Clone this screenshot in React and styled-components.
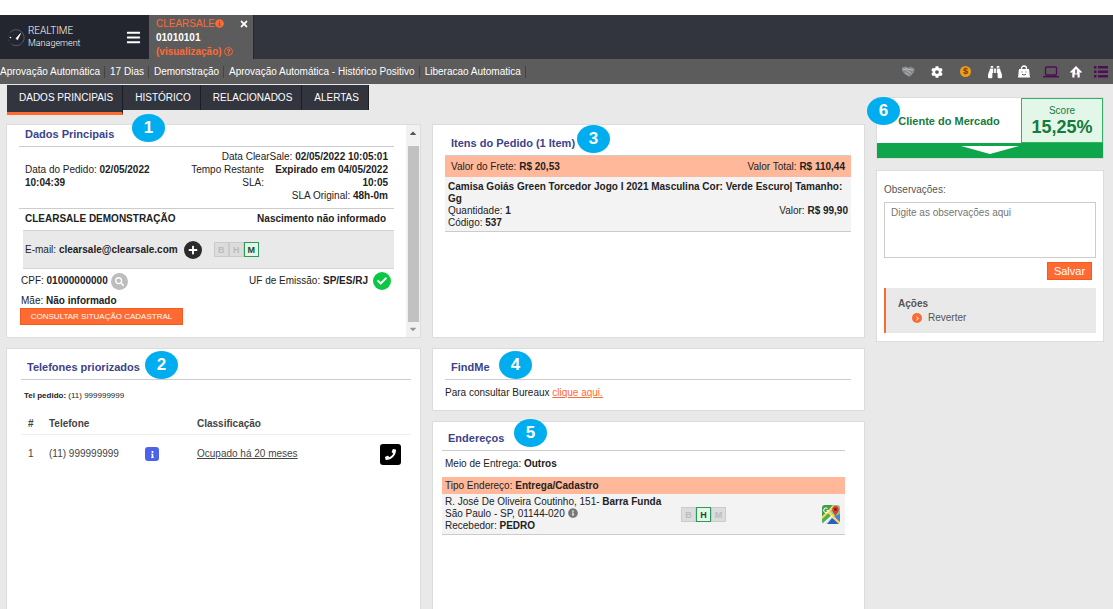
import React from 'react'
import styled, { createGlobalStyle } from 'styled-components'
import {
  FaBars, FaCog, FaBinoculars, FaInfoCircle, FaRegQuestionCircle, FaTimes, FaPlus,
  FaSearch, FaCheck, FaInfo, FaPhone, FaChevronRight, FaCaretUp, FaCaretDown
} from 'react-icons/fa'

const GlobalStyle = createGlobalStyle`
  * {
    box-sizing: border-box;
  }

  body {
    margin: 0;
    background: #fff;
    font-family: 'Liberation Sans', Arial, sans-serif;
    font-size: 10px;
    line-height: 12px;
    color: #222;
  }

  h2, h3, p {
    margin: 0;
  }

  button, textarea {
    font-family: inherit;
  }
`

const infoItems = ['Aprovação Automática', '17 Dias', 'Demonstração', 'Aprovação Automática - Histórico Positivo', 'Liberacao Automatica']
const tabs = ['DADOS PRINCIPAIS', 'HISTÓRICO', 'RELACIONADOS', 'ALERTAS']
const phones = [{ id: 1, number: '(11) 999999999', status: 'Ocupado há 20 meses' }]

const GaugeIcon = () => (
  <svg width='18' height='20' viewBox='0 0 18 20' fill='none'>
    <path d='M4 17.5A8 8 0 1 0 2.5 5' stroke='#565a62' strokeWidth='1' />
    <path d='M2.5 5A8 8 0 0 0 4 17.5' stroke='#3c4048' strokeWidth='1' strokeDasharray='2 2' />
    <path d='M8 11.5l4.5-5-3 6.2z' fill='#fff' stroke='#fff' strokeWidth='.8' />
    <circle cx='2.5' cy='10.5' r='.8' fill='#fff' />
  </svg>
)

const HandshakeIcon = () => (
  <svg width='14' height='12' viewBox='0 0 14 12'>
    <path d='M1 1.500l3-1 3 1L10 .8l3.500 1.700-.5 4-2 2L8.500 11 6 9.500 3.500 8 1 5z' fill='#85898c' />
    <path d='M1.500 3l4 1 5 4M4 2l4 1.500 4.500.5M4 6.500l4 3' stroke='#c4c7c8' fill='none' strokeWidth='.8' />
  </svg>
)

const BagIcon = () => (
  <svg width='12' height='13' viewBox='0 0 12 13'>
    <path d='M3.500 5V3.300a2.500 2.300 0 0 1 5 0V5' fill='none' stroke='#fff' strokeWidth='1.300' />
    <path d='M1 4h10l1 8.500H0z' fill='#fff' />
    <path d='M4 6.500v1M8 6.500v1M4 9.300q2 1.600 4 0' fill='none' stroke='#5c5c5c' strokeWidth='1' />
  </svg>
)

const LaptopIcon = () => (
  <svg width='16' height='12' viewBox='0 0 16 12' fill='none' stroke='#4d0d52'>
    <rect x='2.500' y='1' width='11' height='8' rx='1' strokeWidth='1.300' />
    <path d='M0 10.700h16' strokeWidth='1.500' />
  </svg>
)

const HouseIcon = () => (
  <svg width='12' height='12' viewBox='0 0 12 12'>
    <path d='M6 0l6 6-1 .9-1.300-1V11.500H7.500V8.500h-3v3H2.300V5.900L1 6.900 0 6z' fill='#fff' />
    <path d='M6 3.500v4' stroke='#7b2680' strokeWidth='1.400' />
  </svg>
)

const ListIcon = () => (
  <svg width='14' height='12' viewBox='0 0 14 12'>
    <path d='M0 0h2.500v2.500H0zM4 0h10v2.500H4zM0 4.500h2.500V7H0zM4 4.500h10V7H4zM0 9h2.500v2.500H0zM4 9h10v2.500H4z' fill='#4d0d52' />
  </svg>
)

const MapIcon = () => (
  <svg width='18' height='19' viewBox='0 0 18 19'>
    <defs>
      <clipPath id='map'><rect width='18' height='19' rx='3' /></clipPath>
    </defs>
    <g clipPath='url(#map)'>
      <rect width='18' height='19' fill='#e9e4d6' />
      <path d='M0 0h11L0 12z' fill='#3f9e4b' />
      <path d='M0 12l6-4 4 4-8 7H0z' fill='#4fae58' />
      <path d='M10 0h8v10l-5 2-5-6z' fill='#8cc487' />
      <path d='M5 19l5-6 8 6z' fill='#2c5fc4' />
      <path d='M11 12l7-3v8z' fill='#4a7fdb' />
      <path d='M0 13L12 1M7 7l11 12' stroke='#f7d84a' strokeWidth='2' />
      <path d='M1 19l9-8' stroke='#fff' strokeWidth='1.600' />
      <path d='M5.500 3.500a2.300 2.300 0 1 0 .8 2H4.500' stroke='#fff' fill='none' strokeWidth='1.100' />
    </g>
    <path d='M13.500 12c0-3-3.300-4.300-3.300-7.500a3.300 3.500 0 0 1 6.600 0c0 3.200-3.300 4.500-3.300 7.500z' fill='#dd3b32' />
    <circle cx='13.500' cy='4.400' r='1.300' fill='#7a1712' />
  </svg>
)

const HistoryMarks = ({ active }) => (
  <Marks>
    {['B', 'H', 'M'].map((mark) => (
      <Mark key={mark} $active={mark === active}>{mark}</Mark>
    ))}
  </Marks>
)

const App = () => {
  return (
    <Page>
      <GlobalStyle />
      <Header>
        <Brand>
          <GaugeIcon />
          <BrandName>REALTIME<small>Management</small></BrandName>
          <IconButton aria-label='Menu'><FaBars size={15} /></IconButton>
        </Brand>
        <OrderTab>
          <div>
            <Orange>CLEARSALE<FaInfoCircle size={9} /></Orange>
            <b>01010101</b>
            <Orange as='b'>(visualização) <FaRegQuestionCircle size={9} /></Orange>
          </div>
          <IconButton aria-label='Fechar'><FaTimes size={10} /></IconButton>
        </OrderTab>
      </Header>
      <InfoBar>
        <InfoList>
          {infoItems.map((item) => <li key={item}>{item}</li>)}
        </InfoList>
        <Toolbar>
          <IconButton aria-label='Parceiros'><HandshakeIcon /></IconButton>
          <IconButton aria-label='Configurações'><FaCog size={12} /></IconButton>
          <IconButton aria-label='Valores'><Coin>$</Coin></IconButton>
          <IconButton aria-label='Pesquisar'><FaBinoculars size={14} /></IconButton>
          <IconButton aria-label='Compras'><BagIcon /></IconButton>
          <IconButton aria-label='Dispositivo'><LaptopIcon /></IconButton>
          <IconButton aria-label='Residência'><HouseIcon /></IconButton>
          <IconButton aria-label='Lista'><ListIcon /></IconButton>
        </Toolbar>
      </InfoBar>

      <Body>
        <Workspace>
          <Tabs>
            {tabs.map((tab, index) => <Tab key={tab} $active={index === 0}>{tab}</Tab>)}
          </Tabs>
          <Columns>
            <Column>
              <Panel $height='214px'>
                <Badge $left='125px' $top='-11px'>1</Badge>
                <MainData>
                  <MainContent>
                    <MainTitle>Dados Principais</MainTitle>
                    <Dates>
                      <p>Data do Pedido: <b>02/05/2022 10:04:39</b></p>
                      <DateList>
                        <p>Data ClearSale: <b>02/05/2022 10:05:01</b></p>
                        <Remaining>
                          <span>Tempo Restante SLA:</span>
                          <b>Expirado em 04/05/2022 10:05</b>
                        </Remaining>
                        <p>SLA Original: <b>48h-0m</b></p>
                      </DateList>
                    </Dates>
                    <Customer>
                      <b>CLEARSALE DEMONSTRAÇÃO</b>
                      <b>Nascimento não informado</b>
                    </Customer>
                    <Email>
                      <span>E-mail: <b>clearsale@clearsale.com</b></span>
                      <RoundButton $color='#2b2b2b' $size='18px' aria-label='Adicionar'><FaPlus size={10} /></RoundButton>
                      <HistoryMarks active='M' />
                    </Email>
                    <Documents>
                      <span>CPF: <b>01000000000</b></span>
                      <RoundButton $color='#bdbdbd' $size='17px' aria-label='Buscar CPF'><FaSearch size={9} /></RoundButton>
                      <Uf>UF de Emissão: <b>SP/ES/RJ</b></Uf>
                      <RoundButton $color='#0bc744' $size='18px' aria-label='Confirmado'><FaCheck size={10} /></RoundButton>
                    </Documents>
                    <Mother>Mãe: <b>Não informado</b></Mother>
                    <ConsultButton>CONSULTAR SITUAÇÃO CADASTRAL</ConsultButton>
                  </MainContent>
                  <ScrollTrack>
                    <FaCaretUp size={10} color='#555' />
                    <ScrollThumb />
                    <FaCaretDown size={10} color='#999' />
                  </ScrollTrack>
                </MainData>
              </Panel>

              <Panel $grow>
                <Badge $left='138px' $top='2px'>2</Badge>
                <PhoneContent>
                  <Title>Telefones priorizados</Title>
                  <OrderPhone><b>Tel pedido:</b> (11) 999999999</OrderPhone>
                  <PhoneTable>
                    <thead>
                      <tr>
                        <th>#</th>
                        <th>Telefone</th>
                        <th />
                        <th>Classificação</th>
                        <th />
                      </tr>
                    </thead>
                    <tbody>
                      {phones.map((phone) => (
                        <tr key={phone.id}>
                          <td>{phone.id}</td>
                          <td>{phone.number}</td>
                          <td><SquareButton $color='#4a63e8' $size='14px' aria-label='Detalhes'><FaInfo size={7} /></SquareButton></td>
                          <td><a href='#status'>{phone.status}</a></td>
                          <td><SquareButton $color='#000' $size='21px' aria-label='Ligar'><FaPhone size={11} /></SquareButton></td>
                        </tr>
                      ))}
                    </tbody>
                  </PhoneTable>
                </PhoneContent>
              </Panel>
            </Column>

            <Column>
              <Panel $height='214px'>
                <Badge $left='144px' $top='0'>3</Badge>
                <Content>
                  <Title>Itens do Pedido (1 Item)</Title>
                  <Band $height='21px'>
                    <span>Valor do Frete: <b>R$ 20,53</b></span>
                    <span>Valor Total: <b>R$ 110,44</b></span>
                  </Band>
                  <Item>
                    <b>Camisa Goiás Green Torcedor Jogo I 2021 Masculina Cor: Verde Escuro| Tamanho: Gg</b>
                    <ItemRow>
                      <span>Quantidade: <b>1</b></span>
                      <span>Valor: <b>R$ 99,90</b></span>
                    </ItemRow>
                    <p>Código: <b>537</b></p>
                  </Item>
                </Content>
              </Panel>

              <Panel $height='63px'>
                <Badge $left='66px' $top='2px'>4</Badge>
                <Content>
                  <Title>FindMe</Title>
                  <Bureaux>Para consultar Bureaux <a href='#bureaux'>clique aqui.</a></Bureaux>
                </Content>
              </Panel>

              <Panel $grow>
                <Badge $left='81px' $top='-3px'>5</Badge>
                <AddressContent>
                  <AddressTitle>Endereços</AddressTitle>
                  <Delivery>Meio de Entrega: <b>Outros</b></Delivery>
                  <AddressBand $height='17px'>
                    <span>Tipo Endereço: <b>Entrega/Cadastro</b></span>
                  </AddressBand>
                  <Address>
                    <div>
                      <p>R. José De Oliveira Coutinho, 151- <b>Barra Funda</b></p>
                      <p>São Paulo - SP, 01144-020 <FaInfoCircle size={10} color='#777' /></p>
                      <p>Recebedor: <b>PEDRO</b></p>
                    </div>
                    <HistoryMarks active='H' />
                    <IconButton aria-label='Ver no mapa'><MapIcon /></IconButton>
                  </Address>
                </AddressContent>
              </Panel>
            </Column>
          </Columns>
        </Workspace>

        <Aside>
          <ScoreCard>
            <Badge $left='-10px' $top='-1px'>6</Badge>
            <Client>Cliente do Mercado</Client>
            <Score>
              Score
              <strong>15,25%</strong>
            </Score>
            <Expand aria-label='Expandir'>
              <svg width='58' height='8' viewBox='0 0 58 8'><path d='M0 0h58L29 8z' fill='#fff' /></svg>
            </Expand>
          </ScoreCard>
          <Notes>
            <label htmlFor='notes'>Observações:</label>
            <textarea id='notes' placeholder='Digite as observações aqui' />
            <SaveButton>Salvar</SaveButton>
            <Actions>
              <h3>Ações</h3>
              <button><Arrow><FaChevronRight size={5} /></Arrow>Reverter</button>
            </Actions>
          </Notes>
        </Aside>
      </Body>
    </Page>
  )
}

const Page = styled.div`
  display: flex;
  flex-direction: column;
  min-height: 100vh;
  padding-top: 15px;
`

const Header = styled.header`
  display: flex;
  height: 44px;
  background: #32353e;
`

const IconButton = styled.button`
  display: flex;
  padding: 0;
  border: none;
  background: none;
  color: #fff;
  cursor: pointer;
`

const Brand = styled.div`
  display: flex;
  align-items: center;
  gap: 2px;
  width: 149px;
  padding: 0 8px;
  background: #23262e;

  ${IconButton} {
    margin-left: auto;
  }
`

const BrandName = styled.div`
  display: flex;
  flex-direction: column;
  font-family: Roboto, sans-serif;
  font-weight: 300;
  color: #fff;

  small {
    font-size: 9px;
  }
`

const OrderTab = styled.div`
  display: flex;
  align-items: flex-start;
  justify-content: space-between;
  width: 105px;
  padding: 2px 4px 0 7px;
  border-right: 1px solid #26282f;
  background: #5c5c5c;
  color: #fff;
  line-height: 14px;
  white-space: nowrap;

  b {
    display: block;
  }

  ${IconButton} {
    margin-top: 2px;
  }
`

const Orange = styled.span`
  display: block;
  color: #ff6a33;

  svg {
    vertical-align: -1px;
  }
`

const InfoBar = styled.div`
  display: flex;
  align-items: center;
  justify-content: space-between;
  height: 25px;
  background: #5c5c5c;
`

const InfoList = styled.ul`
  display: flex;
  margin: 0;
  padding: 0;
  list-style: none;
  color: #fff;

  li {
    padding: 0 4px 0 5px;
    border-right: 1px solid #444;
  }

  li:first-child {
    padding-left: 0;
  }
`

const Toolbar = styled.div`
  display: grid;
  grid-template-columns: repeat(5, 29px) repeat(3, 25px);

  ${IconButton} {
    align-items: center;
    justify-content: center;
  }
`

const Coin = styled.span`
  width: 11px;
  height: 11px;
  border-radius: 50%;
  background: #f29a1b;
  color: #6b3d00;
  font-size: 9px;
  font-weight: bold;
  line-height: 11px;
`

const Body = styled.main`
  display: flex;
  flex: 1;
  gap: 11px;
  padding: 0 9px 0 6px;
  background: #e9e9e9;
`

const Workspace = styled.div`
  display: flex;
  flex: 859 1 0;
  flex-direction: column;
`

const Tabs = styled.nav`
  display: flex;
  align-items: flex-start;
  height: 40px;
  padding: 1px 0 0 1px;
`

const Tab = styled.button`
  height: ${(props) => (props.$active ? '30px' : '25px')};
  padding: 0 9px ${(props) => (props.$active ? '2px' : '0')} 12px;
  border: none;
  border-right: 1px solid #1c1e24;
  border-bottom: ${(props) => (props.$active ? '3px solid #ff6a33' : 'none')};
  background: #32353e;
  color: #fff;
  font-size: 10px;
`

const Columns = styled.div`
  display: grid;
  flex: 1;
  grid-template-columns: 415fr 433fr;
  gap: 11px;
`

const Column = styled.div`
  display: flex;
  flex-direction: column;
  gap: 10px;
`

const Panel = styled.section`
  position: relative;
  flex: ${(props) => (props.$grow ? '1' : 'none')};
  min-height: ${(props) => props.$height};
  border: 1px solid #dcdcdc;
  border-bottom-width: ${(props) => (props.$grow ? '0' : '1px')};
  background: #fff;
`

const Badge = styled.span`
  position: absolute;
  top: ${(props) => props.$top};
  left: ${(props) => props.$left};
  width: 33px;
  height: 28px;
  border-radius: 50%;
  background: #00aeef;
  color: #fff;
  font-size: 17px;
  font-weight: bold;
  line-height: 27px;
  text-align: center;
`

const Title = styled.h2`
  height: 31px;
  padding: 12px 6px 0;
  border-bottom: 1px solid #ccc;
  color: #3b4488;
  font-size: 11px;
  line-height: 12px;
`

const MainTitle = styled(Title)`
  height: 22px;
  padding-top: 3px;
`

const AddressTitle = styled(Title)`
  height: 29px;
  padding-top: 10px;
`

const MainData = styled.div`
  display: flex;
  justify-content: space-between;
  min-height: 212px;
`

const MainContent = styled.div`
  flex: 1;
  padding: 0 12px;
`

const Dates = styled.div`
  display: flex;
  justify-content: space-between;
  padding: 3px 6px 6px;
  border-bottom: 1px solid #ccc;
  line-height: 13px;

  > p {
    width: 140px;
    padding-top: 13px;
  }
`

const DateList = styled.div`
  width: 210px;
  text-align: right;
`

const Remaining = styled.div`
  display: flex;
  justify-content: space-between;
  gap: 8px;

  span {
    width: 86px;
  }

  b {
    flex: 1;
  }
`

const Customer = styled.div`
  display: flex;
  justify-content: space-between;
  padding: 4px 8px 5px 6px;
`

const Email = styled.div`
  display: flex;
  align-items: center;
  gap: 6px;
  height: 39px;
  margin-left: 4px;
  padding-left: 2px;
  border: solid #d4d4d4;
  border-width: 1px 0;
  background: #e9e9e9;
`

const Marks = styled.div`
  display: flex;
  margin-left: 6px;
`

const Mark = styled.span`
  width: 15px;
  height: 15px;
  border: 1px solid ${(props) => (props.$active ? '#2c9a5b' : '#cbcbcb')};
  background: ${(props) => (props.$active ? '#e3f7e9' : '#dcdcdc')};
  color: ${(props) => (props.$active ? '#1c4a2e' : '#bcbcbc')};
  font-size: 9px;
  font-weight: bold;
  line-height: 15px;
  text-align: center;
`

const RoundButton = styled.button`
  display: flex;
  align-items: center;
  justify-content: center;
  flex: none;
  width: ${(props) => props.$size};
  height: ${(props) => props.$size};
  padding: 0;
  border: none;
  border-radius: 50%;
  background: ${(props) => props.$color};
  color: #fff;
`

const SquareButton = styled(RoundButton)`
  border-radius: 3px;
`

const Documents = styled.div`
  display: flex;
  align-items: center;
  gap: 3px;
  padding: 3px 3px 4px 2px;
`

const Uf = styled.span`
  margin: 0 2px 0 auto;
`

const Mother = styled.p`
  padding: 1px 2px;
`

const ConsultButton = styled.button`
  display: block;
  width: 163px;
  height: 17px;
  margin-left: 1px;
  padding: 0;
  border: 1px solid #f55a1f;
  background: #ff6a33;
  color: #fff;
  font-size: 8px;
`

const ScrollTrack = styled.div`
  display: flex;
  align-items: center;
  flex-direction: column;
  width: 14px;
  padding: 3px 0;
  background: #f1f1f1;
`

const ScrollThumb = styled.div`
  flex: 1;
  width: 11px;
  margin: 8px 0 2px;
  background: #c1c1c1;
`

const PhoneContent = styled.div`
  padding: 0 9px 0 14px;
`

const OrderPhone = styled.p`
  padding: 10px 3px 0;
  font-size: 8px;
`

const PhoneTable = styled.table`
  width: 100%;
  margin-top: 12px;
  border-collapse: collapse;
  table-layout: fixed;
  color: #444;

  th, td {
    padding: 0;
    text-align: left;
  }

  th {
    height: 20px;
    border-bottom: 1px solid #eee;
  }

  td {
    height: 40px;
  }

  th:nth-child(1) {
    width: 28px;
  }

  th:nth-child(2) {
    width: 96px;
  }

  th:nth-child(3) {
    width: 52px;
  }

  th:nth-child(5) {
    width: 31px;
  }

  th:first-child, td:first-child {
    padding-left: 7px;
  }

  a {
    color: #444;
  }
`

const Content = styled.div`
  padding: 0 13px 0 12px;
`

const Band = styled.div`
  display: flex;
  align-items: center;
  justify-content: space-between;
  height: ${(props) => props.$height};
  padding: 0 6px;
  background: #ffb899;
`

const AddressBand = styled(Band)`
  padding: 0 3px;
`

const Item = styled.div`
  padding: 4px 3px 2px;
  border-bottom: 1px solid #ccc;
  background: #f3f3f3;
`

const ItemRow = styled.div`
  display: flex;
  justify-content: space-between;
`

const Bureaux = styled.p`
  padding-top: 7px;

  a {
    color: #ff6a33;
  }
`

const AddressContent = styled.div`
  padding: 0 19px 0 9px;
`

const Delivery = styled.p`
  padding: 7px 3px;
`

const Address = styled.div`
  display: grid;
  align-items: center;
  grid-template-columns: 230px 1fr auto;
  padding: 2px 5px 2px 3px;
  border-bottom: 1px solid #ccc;
  background: #f3f3f3;

  svg {
    vertical-align: -1px;
  }
`

const Aside = styled.aside`
  display: flex;
  flex: 228 1 0;
  flex-direction: column;
  gap: 11px;
  padding-top: 13px;
`

const ScoreCard = styled.section`
  position: relative;
  display: grid;
  grid-template-columns: 1fr 82px;
  border: 1px solid #dcdcdc;
  background: #fff;
`

const Client = styled.h2`
  align-self: center;
  color: #157a3c;
  font-size: 11px;
  text-align: center;
`

const Score = styled.div`
  display: flex;
  flex-direction: column;
  padding: 6px 0 5px;
  border: 1px solid #36b062;
  background: #e3f7e9;
  color: #157a3c;
  text-align: center;

  strong {
    font-size: 18px;
    line-height: 20px;
  }
`

const Expand = styled.button`
  display: flex;
  grid-column: 1 / -1;
  justify-content: center;
  height: 15px;
  padding: 3px 0 0;
  border: none;
  background: #0fa54a;
`

const Notes = styled.section`
  display: flex;
  flex-direction: column;
  padding: 13px 7px 8px;
  border: 1px solid #dcdcdc;
  background: #fff;
  color: #555;

  textarea {
    height: 56px;
    margin-top: 6px;
    padding: 4px 6px;
    border: 1px solid #ccc;
    font-size: 10px;
    resize: none;
  }

  textarea::placeholder {
    color: #757575;
  }
`

const SaveButton = styled.button`
  align-self: flex-end;
  width: 45px;
  height: 18px;
  margin: 4px 4px 8px;
  padding: 0;
  border: 1px solid #f55a1f;
  background: #ff6a33;
  color: #fff;
  font-size: 11px;
`

const Actions = styled.div`
  padding: 10px 12px 7px;
  border-left: 2px solid #ff6a33;
  background: #e9e9e9;

  h3 {
    font-size: 10px;
  }

  button {
    display: flex;
    align-items: center;
    gap: 6px;
    margin-left: 14px;
    padding: 2px 0;
    border: none;
    background: none;
    color: #555;
    font-size: 10px;
    line-height: 12px;
  }
`

const Arrow = styled.span`
  display: flex;
  align-items: center;
  justify-content: center;
  width: 10px;
  height: 10px;
  border-radius: 50%;
  background: #ff6a33;
  color: #fff;
`

export default App
